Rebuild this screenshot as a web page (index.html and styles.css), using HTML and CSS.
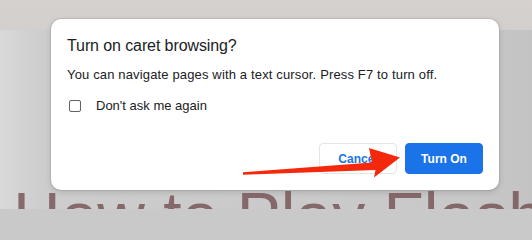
FILE: index.html
```html
<!DOCTYPE html>
<html>
<head>
<meta charset="utf-8">
<link rel="stylesheet" href="styles.css">
</head>
<body>
<div class="page">
  <div class="topband"></div>
  <div class="dialog">
    <div class="title">Turn on caret browsing?</div>
    <div class="desc">You can navigate pages with a text cursor. Press F7 to turn off.</div>
    <label class="check-row"><span class="box"></span><span>Don't ask me again</span></label>
    <div class="actions">
      <button class="btn cancel">Cancel</button>
      <button class="btn primary">Turn On</button>
    </div>
  </div>
  <div class="heading">How to Play Flash</div>
  <svg class="arrow" width="532" height="209" viewBox="0 0 532 209">
    <polygon points="243,172.3 372,162.5 369,148 400,157.5 374,177.5 375.5,170 243,174.7" fill="#f4290c"/>
  </svg>
</div>
</body>
</html>
```
FILE: styles.css
```css
html, body {
  margin: 0;
  padding: 0;
  background: #c9c9c9;
}
body {
  width: 532px;
  height: 209px;
  overflow: hidden;
  font-family: "Liberation Sans", Arial, sans-serif;
}
.page {
  position: relative;
  width: 532px;
  height: 209px;
  overflow: hidden;
  background: linear-gradient(90deg, #d9d9d9 0%, #cdcdcd 8%, #cacaca 50%, #c8c8c8 88%, #c3c3c3 100%);
  display: flow-root;
}
.topband {
  position: absolute;
  left: 0;
  top: 0;
  width: 532px;
  height: 30px;
  background: linear-gradient(180deg, #d6d1ce 0%, #d2cfcd 100%);
}
.dialog {
  position: relative;
  margin: 19px 0 0 51px;
  width: 448px;
  box-sizing: border-box;
  padding: 17px 16px 16px 16px;
  background: #fff;
  border-radius: 10px;
  box-shadow: 0 0 0 1px rgba(0, 0, 0, 0.07), 0 2px 6px rgba(0, 0, 0, 0.15);
  color: #202124;
}
.title {
  font-size: 16px;
  line-height: 20px;
  letter-spacing: -0.1px;
}
.desc {
  margin-top: 9px;
  font-size: 13px;
  line-height: 20px;
  letter-spacing: 0.15px;
}
.check-row {
  margin-top: 11px;
  display: flex;
  align-items: center;
  font-size: 13px;
  line-height: 20px;
}
.box {
  width: 10px;
  height: 10px;
  margin-left: 2px;
  margin-right: 15px;
  border: 1px solid #5f6368;
  border-radius: 2px;
}
.actions {
  margin-top: 27px;
  display: flex;
  justify-content: flex-end;
  gap: 8px;
}
.btn {
  width: 78px;
  height: 31px;
  box-sizing: border-box;
  border-radius: 4px;
  font-family: "Liberation Sans", Arial, sans-serif;
  font-size: 12px;
  font-weight: bold;
  padding: 0;
}
.cancel {
  background: #fff;
  border: 1px solid #e3e5e8;
  color: #1a73e8;
}
.primary {
  background: #1a73e8;
  border: 1px solid #1a73e8;
  color: #fff;
}
.heading {
  margin: 1px 0 0 13px;
  font-size: 66px;
  line-height: 50px;
  white-space: nowrap;
  color: rgba(110, 72, 74, 0.75);
  filter: blur(0.6px);
}
.arrow {
  position: absolute;
  left: 0;
  top: 0;
}
```
